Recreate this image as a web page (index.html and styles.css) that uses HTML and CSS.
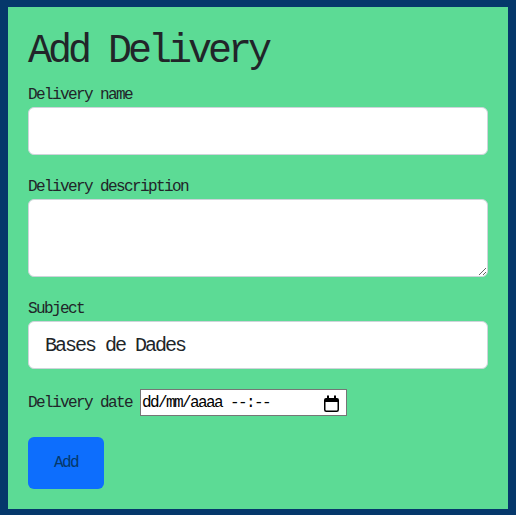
FILE: index.html
```html
<!DOCTYPE html>
<html lang="ca">
<head>
<meta charset="utf-8">
<title>Add Delivery</title>
<link rel="stylesheet" href="styles.css">
</head>
<body>
<main class="card">
  <h1 class="title">Add Delivery</h1>
  <form class="form">
    <div class="field">
      <label class="label" for="name">Delivery name</label>
      <input class="control" id="name" type="text">
    </div>
    <div class="field">
      <label class="label" for="desc">Delivery description</label>
      <textarea class="control control-area" id="desc"></textarea>
    </div>
    <div class="field">
      <label class="label" for="subject">Subject</label>
      <input class="control control-lg" id="subject" type="text" value="Bases de Dades" readonly>
    </div>
    <div class="date-row">
      <span class="label-inline">Delivery date</span>
      <span class="date-field">
        <span class="date-text">dd/mm/aaaa --:--</span>
        <svg class="cal-icon" width="15" height="17" viewBox="0 0 15 17" aria-hidden="true">
          <rect x="0.75" y="3.75" width="13.5" height="12.5" rx="1.5" fill="none" stroke="#000" stroke-width="1.5"/>
          <rect x="0.75" y="3.75" width="13.5" height="3.25" fill="#000"/>
          <rect x="3" y="0.5" width="2" height="4" fill="#000"/>
          <rect x="10" y="0.5" width="2" height="4" fill="#000"/>
        </svg>
      </span>
    </div>
    <button class="btn" type="button">Add</button>
  </form>
</main>
</body>
</html>
```

FILE: styles.css
```css
html, body {
  background: #05386b;
}
body {
  margin: 7px 8px 0;
  font-family: "Liberation Mono", "DejaVu Sans Mono", monospace;
  font-size: 16px;
  letter-spacing: -0.1em;
  color: #212529;
}
.card {
  background: #5cdb95;
  padding: 20px;
}
.title {
  margin: 0 0 8px;
  padding-top: 2px;
  font-size: 40px;
  line-height: 46px;
  letter-spacing: -0.1em;
  font-weight: normal;
  color: #212529;
}
.form {
  display: flex;
  flex-direction: column;
}
.field {
  display: flex;
  flex-direction: column;
  margin-bottom: 20px;
}
.label {
  font-size: 16px;
  line-height: 24px;
  letter-spacing: -0.1em;
}
.control {
  box-sizing: border-box;
  width: 100%;
  height: 48px;
  margin: 0;
  padding: 6px 12px;
  border: 1px solid #ced4da;
  border-radius: 6px;
  background: #fff;
  font-family: inherit;
  font-size: 16px;
  letter-spacing: -0.1em;
  color: #212529;
  outline: none;
}
.control-area {
  height: 78px;
  resize: vertical;
  display: block;
}
.control-lg {
  padding: 8px 16px;
  font-size: 20px;
  line-height: 30px;
  letter-spacing: -0.1em;
}
.date-row {
  display: flex;
  align-items: center;
  gap: 8px;
  margin-bottom: 21px;
  font-size: 16px;
  letter-spacing: -0.1em;
}
.label-inline {
  line-height: 24px;
}
.date-field {
  box-sizing: border-box;
  width: 207px;
  height: 27px;
  display: flex;
  align-items: center;
  padding: 0 7px 0 1px;
  border: 1px solid #767676;
  background: #fff;
  color: #000;
}
.date-text {
  flex: 1;
  line-height: 20px;
}
.cal-icon {
  display: block;
  margin-top: 1px;
}
.btn {
  align-self: flex-start;
  margin: 0;
  padding: 14px 26px;
  border: 0;
  border-radius: 6px;
  background: #0d6efd;
  color: #05386b;
  font-family: inherit;
  font-size: 16px;
  letter-spacing: -0.1em;
  line-height: 24px;
}
```
